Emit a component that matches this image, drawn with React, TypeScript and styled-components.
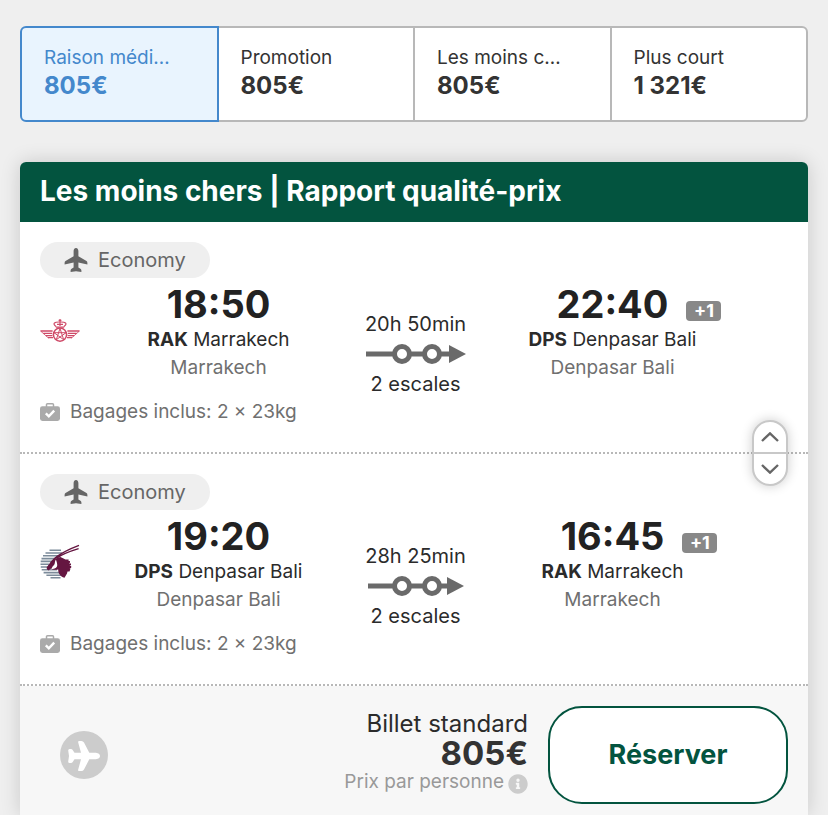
import React, { useState } from 'react';
import styled, { createGlobalStyle } from 'styled-components';
import { FaInfoCircle } from 'react-icons/fa';

const GlobalStyle = createGlobalStyle`
  * { box-sizing: border-box; }
  body {
    margin: 0;
    background: #efefef;
    color: #2b2b2b;
    font-family: Inter, 'Liberation Sans', sans-serif;
    font-size: 19px;
    line-height: 28px;
  }
  button { font: inherit; cursor: pointer; }
`;

const Page = styled.main`
  padding: 26px 20px 0;
`;

const SortBar = styled.div`
  display: flex;
  margin-bottom: 40px;
`;

const SortOption = styled.button<{ $active: boolean }>`
  flex: 1;
  min-width: 0;
  padding: 16px 22px 20px;
  text-align: left;
  white-space: nowrap;
  color: ${(p) => (p.$active ? '#4488cc' : '#333')};
  background: ${(p) => (p.$active ? '#e9f4fe' : '#fff')};
  border: 2px solid ${(p) => (p.$active ? '#4488cc' : '#b8b8b8')};
  z-index: ${(p) => (p.$active ? 1 : 0)};
  & + & { margin-left: -2px; }
  &:first-child { border-radius: 6px 0 0 6px; }
  &:last-child { border-radius: 0 6px 6px 0; }
`;

const SortName = styled.span`
  display: block;
`;

const SortPrice = styled.strong`
  display: block;
  font-size: 24px;
  font-weight: 700;
`;

const Card = styled.article`
  background: #fff;
  border-radius: 6px 6px 0 0;
  box-shadow: 0 0 20px rgba(0, 0, 0, 0.16);
`;

const CardTitle = styled.h2`
  margin: 0;
  padding: 9px 20px 11px;
  border-radius: 6px 6px 0 0;
  background: #03543f;
  color: #fff;
  font-size: 28px;
  font-weight: 700;
  line-height: 40px;
`;

const Leg = styled.section`
  position: relative;
  padding: 20px 20px 26px;
  border-bottom: 2px dotted #b8b8b8;
`;

const Cabin = styled.div`
  display: inline-flex;
  align-items: center;
  gap: 10px;
  height: 36px;
  padding: 0 24px;
  border-radius: 18px;
  background: #efefef;
  color: #666;
  font-size: 20px;
  vertical-align: top;
`;

const Route = styled.div`
  display: grid;
  grid-template-columns: 80px repeat(3, minmax(0, 1fr)) 77px;
  align-items: center;
`;

const Stop = styled.div`
  text-align: center;
  white-space: nowrap;
`;

const Time = styled.div`
  padding-top: 2px;
  margin-bottom: -2px;
  font-size: 38px;
  font-weight: 700;
  line-height: 48px;
  color: #222;
`;

const TimeValue = styled.span`
  position: relative;
`;

const DayShift = styled.span`
  position: absolute;
  left: 100%;
  bottom: 6px;
  width: 35px;
  margin-left: 18px;
  border-radius: 4px;
  background: #888;
  color: #fff;
  font-size: 18px;
  line-height: 20px;
`;

const City = styled.div``;

const Airport = styled.div`
  color: #707070;
`;

const Duration = styled.div`
  display: flex;
  flex-direction: column;
  align-items: center;
  align-self: start;
  gap: 8px;
  padding-top: 34px;
  margin-bottom: -16px;
  font-size: 20px;
  line-height: 24px;
`;

const Baggage = styled.div`
  display: flex;
  align-items: center;
  gap: 10px;
  margin-top: 16px;
  color: #707070;
`;

const Reorder = styled.div`
  position: absolute;
  right: 20px;
  bottom: -34px;
  z-index: 1;
  width: 36px;
  border: 2px solid #c8c8c8;
  border-radius: 18px;
  background: #fff;
  box-shadow: 0 0 12px rgba(0, 0, 0, 0.2);
`;

const ReorderButton = styled.button`
  display: flex;
  align-items: center;
  justify-content: center;
  width: 100%;
  height: 30px;
  padding: 0;
  border: 0;
  background: none;
  & + & { border-top: 2px solid #c8c8c8; height: 32px; }
`;

const Footer = styled.footer`
  display: flex;
  align-items: center;
  gap: 20px;
  padding: 20px 20px 11px 40px;
  background: #f7f7f7;
`;

const Fare = styled.div`
  flex: 1;
  padding-bottom: 4px;
  text-align: right;
`;

const FareName = styled.div`
  font-size: 24px;
  line-height: 24px;
`;

const FarePrice = styled.strong`
  display: block;
  font-size: 33px;
  font-weight: 700;
  line-height: 34px;
  color: #333;
`;

const FareNote = styled.div`
  display: flex;
  align-items: center;
  justify-content: flex-end;
  gap: 4px;
  color: #999;
  line-height: 24px;
  svg { color: #ccc; margin-top: 4px; }
`;

const BookButton = styled.button`
  width: 240px;
  height: 98px;
  border: 2px solid #03543f;
  border-radius: 34px;
  background: #fff;
  color: #03543f;
  font-size: 27px;
  font-weight: 700;
`;

const CabinIcon = () => (
  <svg width="24" height="24" viewBox="0 0 24 24" fill="#666" aria-hidden="true">
    <path d="M12 0C10.4 0 9.6 1.6 9.6 3.2V8.2L1.5 13Q.6 13.7.6 15V16.4L9.6 14.4V19.4L7.2 21Q6.6 21.5 6.6 22.5V24L12 23.2L17.4 24V22.5Q17.4 21.5 16.8 21L14.4 19.4V14.4L23.4 16.4V15Q23.4 13.7 22.5 13L14.4 8.2V3.2C14.4 1.6 13.6 0 12 0Z" />
  </svg>
);

const FarePlaneIcon = () => (
  <svg width="48" height="48" viewBox="0 0 48 48" aria-hidden="true">
    <circle cx="24" cy="24" r="24" fill="#ccc" />
    <path
      fill="#fff"
      d="M40 25C40 22.7 37.5 21.7 35 21.7H29.3L24 11.5Q23 10 21.5 10H19.2Q17.8 10 18.2 11.4L21 21.7H14.5L12.5 18.8Q12 18 11 18H9.5Q8.2 18 8.2 19.5L9 25L8.2 30.5Q8.2 32 9.5 32H11Q12 32 12.5 31.2L14.5 28.3H21L18.2 38.6Q17.8 40 19.2 40H21.5Q23 40 24 38.5L29.3 28.3H35C37.5 28.3 40 27.3 40 25Z"
    />
  </svg>
);

const BagIcon = () => (
  <svg width="20" height="18" viewBox="0 0 20 18" aria-hidden="true">
    <path d="M6.5 4V1.8Q6.5 .8 7.5 .8H12.5Q13.5 .8 13.5 1.8V4" fill="none" stroke="#aaa" strokeWidth="1.5" />
    <rect y="3.2" width="20" height="14.8" rx="2.4" fill="#aaa" />
    <path d="M5.8 10.4L8.8 13.3L14.2 7.6" fill="none" stroke="#fff" strokeWidth="2.4" />
  </svg>
);

const StopsArrow = ({ width }: { width: number }) => {
  const mid = width / 2 + 1;
  return (
    <svg width={width} height="20" viewBox={`0 0 ${width} 20`} aria-hidden="true">
      <path d={`M0 10H${width - 14}`} stroke="#6a6a6a" strokeWidth="5" />
      <path d={`M${width - 17} 1L${width} 10L${width - 17} 19Z`} fill="#6a6a6a" />
      <circle cx={mid - 15} cy="10" r="7.5" fill="#fff" stroke="#6a6a6a" strokeWidth="5" />
      <circle cx={mid + 15} cy="10" r="7.5" fill="#fff" stroke="#6a6a6a" strokeWidth="5" />
    </svg>
  );
};

const RoyalAirMarocLogo = () => (
  <svg width="40" height="40" viewBox="0 0 40 40" fill="none" stroke="#cf4a68" role="img" aria-label="Royal Air Maroc">
    <circle cx="20" cy="24.6" r="6.6" strokeWidth="1.5" />
    <path strokeWidth="1" d="M20 18.4L23.7 29.7L14 22.7H26L16.3 29.7Z" />
    <path strokeWidth="1.4" d="M.6 21H12.6M3.2 23.4H12.2M5.8 25.6H12.4M8 27.6H13M27.4 21H39.4M27.8 23.4H36.8M27.6 25.6H34.2M27 27.6H32" />
    <path strokeWidth=".8" d="M.6 21L8.4 28M39.4 21L31.6 28" />
    <path strokeWidth="1.2" d="M15.8 17.2H24.2M16 16.4C12 13.4 14.5 11.8 20 12C25.5 11.8 28 13.4 24 16.4M17 14.4H23M20 9V16M18.6 10.4H21.4" />
  </svg>
);

const QatarLogo = () => (
  <svg width="40" height="40" viewBox="0 0 40 40" role="img" aria-label="Qatar Airways">
    <path
      stroke="#7c8b9a"
      strokeWidth="1.6"
      d="M9.5 8.3H21M5.5 11H22M3 13.8H18M1.5 16.6H15M.7 19.4H12M.5 22.2H9M.8 25H9M1.7 27.8H17M3.6 30.6H19M6.4 33.2H21M10.5 35.8H20.5"
    />
    <path d="M9.5 22C12 18 16 15.5 20.5 15L25.5 17.5H28.6V19H30V20.5L29 21.5H31V23L29.4 24H31.2V25.7L29.5 26.8H30.5L29.5 29.5H27.5L27 31.5L24.5 35.8C20 34.5 18.2 31.6 18.2 27.6Q12.5 28.4 10.3 26.8L8.8 28.4Q6.4 28 6.6 25.5Q8 23 9.5 22Z" fill="#651641" />
    <path d="M15.9 17.4C14.2 20 15.8 22 12.6 24.4L11 27.4L14.5 26.4C18.2 25 17.6 22.5 15.9 17.4Z" fill="#fff" />
    <path d="M8.5 25C12 17.5 18 11.5 39 3.4M17 16C23 11.5 29 9.5 38.6 6.6" fill="none" stroke="#651641" strokeWidth="1.4" />
  </svg>
);

const ChevronIcon = ({ down = false }: { down?: boolean }) => (
  <svg width="18" height="10" viewBox="0 0 18 10" fill="none" stroke="#666" strokeWidth="2.4" aria-hidden="true">
    <path d={down ? 'M1 1L9 8.6L17 1' : 'M1 9L9 1.4L17 9'} />
  </svg>
);

type Place = { time: string; code: string; city: string; airport: string; shift?: string };
type LegData = { logo: React.ReactNode; from: Place; to: Place; duration: string; arrow: number };

const marrakech = { code: 'RAK', city: 'Marrakech', airport: 'Marrakech' };
const denpasar = { code: 'DPS', city: 'Denpasar Bali', airport: 'Denpasar Bali' };

const legs: LegData[] = [
  {
    logo: <RoyalAirMarocLogo />,
    from: { ...marrakech, time: '18:50' },
    to: { ...denpasar, time: '22:40', shift: '+1' },
    duration: '20h 50min',
    arrow: 100,
  },
  {
    logo: <QatarLogo />,
    from: { ...denpasar, time: '19:20' },
    to: { ...marrakech, time: '16:45', shift: '+1' },
    duration: '28h 25min',
    arrow: 96,
  },
];

const sorts = [
  { name: 'Raison médi…', price: '805€' },
  { name: 'Promotion', price: '805€' },
  { name: 'Les moins c…', price: '805€' },
  { name: 'Plus court', price: '1 321€' },
];

const StopInfo = ({ place }: { place: Place }) => (
  <Stop>
    <Time>
      <TimeValue>
        {place.time}
        {place.shift && <DayShift>{place.shift}</DayShift>}
      </TimeValue>
    </Time>
    <City>
      <b>{place.code}</b> {place.city}
    </City>
    <Airport>{place.airport}</Airport>
  </Stop>
);

export default function App() {
  const [active, setActive] = useState(0);
  return (
    <>
      <GlobalStyle />
      <Page>
        <SortBar>
          {sorts.map((s, i) => (
            <SortOption key={s.name} type="button" $active={i === active} aria-pressed={i === active} onClick={() => setActive(i)}>
              <SortName>{s.name}</SortName>
              <SortPrice>{s.price}</SortPrice>
            </SortOption>
          ))}
        </SortBar>
        <Card>
          <CardTitle>Les moins chers | Rapport qualité-prix</CardTitle>
          {legs.map((leg, i) => (
            <Leg key={leg.duration}>
              <Cabin>
                <CabinIcon />
                Economy
              </Cabin>
              <Route>
                {leg.logo}
                <StopInfo place={leg.from} />
                <Duration>
                  <span>{leg.duration}</span>
                  <StopsArrow width={leg.arrow} />
                  <span>2 escales</span>
                </Duration>
                <StopInfo place={leg.to} />
              </Route>
              <Baggage>
                <BagIcon />
                Bagages inclus: 2 × 23kg
              </Baggage>
              {i === 0 && (
                <Reorder>
                  <ReorderButton type="button" aria-label="Vol précédent">
                    <ChevronIcon />
                  </ReorderButton>
                  <ReorderButton type="button" aria-label="Vol suivant">
                    <ChevronIcon down />
                  </ReorderButton>
                </Reorder>
              )}
            </Leg>
          ))}
          <Footer>
            <FarePlaneIcon />
            <Fare>
              <FareName>Billet standard</FareName>
              <FarePrice>805€</FarePrice>
              <FareNote>
                Prix par personne
                <FaInfoCircle size={20} aria-hidden="true" />
              </FareNote>
            </Fare>
            <BookButton type="button">Réserver</BookButton>
          </Footer>
        </Card>
      </Page>
    </>
  );
}
